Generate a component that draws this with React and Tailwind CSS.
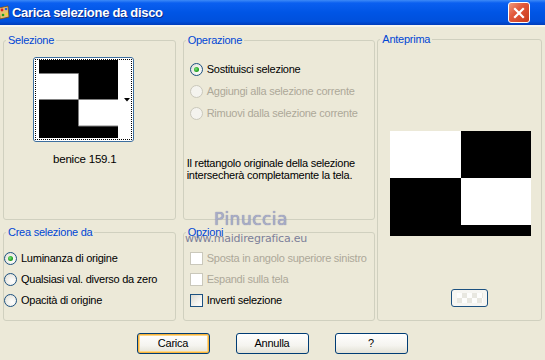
import React from "react";

const FONT = { fontFamily: '"Liberation Sans", Arial, sans-serif' };

function Radio({ checked, disabled, label }) {
  return (
    <div className="flex items-center h-[13px]">
      <span
        className={
          "relative w-[13px] h-[13px] rounded-full border flex-none " +
          (disabled
            ? "border-[#cac8bb] bg-[#f4f3ee]"
            : "border-[#1c5180] bg-[radial-gradient(circle_at_65%_65%,#ffffff_0%,#e8e7e0_70%,#d4d2c6_100%)]")
        }
      >
        {checked && (
          <span className="absolute left-[3px] top-[3px] w-[5px] h-[5px] rounded-full bg-[radial-gradient(circle_at_40%_40%,#7be37b_0%,#21a121_60%,#1a7e1a_100%)]" />
        )}
      </span>
      <span className={"ml-[4px] whitespace-nowrap " + (disabled ? "text-[#aca899]" : "text-black")}>{label}</span>
    </div>
  );
}

function Check({ disabled, label }) {
  return (
    <div className="flex items-center h-[13px]">
      <span
        className={
          "w-[13px] h-[13px] border flex-none " +
          (disabled
            ? "border-[#cac8bb] bg-white"
            : "border-[#1c5180] bg-[linear-gradient(135deg,#dcdad0_0%,#f4f3ee_60%,#ffffff_100%)]")
        }
      />
      <span className={"ml-[4px] whitespace-nowrap " + (disabled ? "text-[#aca899]" : "text-black")}>{label}</span>
    </div>
  );
}

function Group({ label, className, children }) {
  return (
    <div className={"relative border border-[#d0d0bf] rounded-[3px] " + className}>
      <span className="absolute -top-[8px] left-[2px] px-[2px] bg-[#ece9d8] text-[#0046d5] leading-[14px]">{label}</span>
      {children}
    </div>
  );
}

function Btn({ children, def }) {
  return (
    <div
      className={
        "w-[73px] h-[21px] rounded-[3px] border border-[#003c74] flex items-center justify-center text-black bg-[linear-gradient(180deg,#ffffff_0%,#f5f4ef_60%,#e3e1d6_100%)] " +
        (def ? "shadow-[inset_0_0_0_1px_#f8b33c,inset_0_0_0_2px_#fdd889]" : "")
      }
    >
      {children}
    </div>
  );
}

export default function App() {
  return (
    <div className="w-[545px] h-[360px] bg-[#ece9d8] overflow-hidden relative text-[11px] tracking-[-0.25px]" style={FONT}>
      {/* title bar */}
      <div className="h-[25px] flex items-center bg-[linear-gradient(180deg,#3d8af7_0%,#0a5ff0_12%,#0055e5_50%,#0050dc_85%,#003dbb_100%)]">
        <svg width="11" height="16" viewBox="0 0 11 16" className="flex-none -ml-[1px]">
          <path d="M0 3 L9 1 L10 12 L1 14 Z" fill="#e8c070" stroke="#7a4a10" strokeWidth="0.8" />
          <circle cx="3" cy="5" r="1.4" fill="#e02020" />
          <circle cx="7" cy="4" r="1.3" fill="#2060e0" />
          <circle cx="4" cy="10" r="1.3" fill="#20a020" />
          <circle cx="7.5" cy="9" r="1.2" fill="#f0e020" />
        </svg>
        <span className="ml-[2px] text-white font-bold text-[13px] tracking-[-0.3px] [text-shadow:1px_1px_0_#0a2a8a]">Carica selezione da disco</span>
        <div className="ml-auto mr-[15px] w-[22px] h-[21px] rounded-[3px] border border-white bg-[linear-gradient(135deg,#f09a7e_0%,#e2593c_40%,#c8391a_100%)] flex items-center justify-center">
          <svg width="12" height="12" viewBox="0 0 12 12">
            <path d="M2 2 L10 10 M10 2 L2 10" stroke="white" strokeWidth="2.2" strokeLinecap="square" />
          </svg>
        </div>
      </div>
      <div className="h-[2px] bg-[#f6f5ef]" />

      {/* body */}
      <div className="flex pt-[13px] pl-[3px] pr-[3px]">
        {/* column 1 */}
        <div className="w-[173px] flex flex-col">
          <Group label="Selezione" className="h-[180px]">
            <div className="mt-[16px] ml-[29px] w-[101px] h-[85px] rounded-[3px] border border-[#3c6e9e] bg-white p-[1px]">
              <div className="relative w-full h-full border border-dotted border-black">
                <svg width="79" height="78" viewBox="0 0 79 78" className="absolute left-[3px] top-0">
                  <rect x="0" y="0" width="79" height="78" fill="black" />
                  <rect x="0" y="13" width="39" height="26" fill="white" />
                  <rect x="39" y="39" width="40" height="27" fill="white" />
                  <path d="M0 13.5 H39.5 V66 H79 M39.5 39.5 H79 M0 39.5 H39" stroke="#808080" strokeWidth="1" fill="none" />
                </svg>
                <svg width="6" height="4" viewBox="0 0 6 4" className="absolute right-[1px] top-[38px]">
                  <path d="M0 0 H6 L3 3.5 Z" fill="black" />
                </svg>
              </div>
            </div>
            <div className="mt-[9px] ml-[49px] text-[11.5px] tracking-[-0.2px] text-black">benice 159.1</div>
          </Group>
          <Group label="Crea selezione da" className="mt-[12px] h-[89px]">
            <div className="pt-[19px] pl-[0px] flex flex-col gap-[8px]">
              <Radio checked label="Luminanza di origine" />
              <Radio label="Qualsiasi val. diverso da zero" />
              <Radio label="Opacità di origine" />
            </div>
          </Group>
        </div>

        {/* column 2 */}
        <div className="ml-[7px] w-[193px] flex flex-col">
          <Group label="Operazione" className="h-[180px]">
            <div className="pt-[22px] pl-[6px] flex flex-col gap-[9px]">
              <Radio checked label="Sostituisci selezione" />
              <Radio disabled label="Aggiungi alla selezione corrente" />
              <Radio disabled label="Rimuovi dalla selezione corrente" />
            </div>
            <div className="mt-[37px] ml-[3px] leading-[12px] text-black">
              Il rettangolo originale della selezione
              <br />
              intersecherà completamente la tela.
            </div>
          </Group>
          <Group label="Opzioni" className="mt-[12px] h-[89px]">
            <div className="pt-[19px] pl-[6px] flex flex-col gap-[8px]">
              <Check disabled label="Sposta in angolo superiore sinistro" />
              <Check disabled label="Espandi sulla tela" />
              <Check label="Inverti selezione" />
            </div>
          </Group>
        </div>

        {/* column 3 */}
        <div className="ml-[2px] w-[165px] -mt-[1px]">
          <Group label="Anteprima" className="h-[282px] flex flex-col items-center">
            <svg width="141" height="105" viewBox="0 0 141 105" className="mt-[91px] ml-[2px]">
              <rect x="0" y="0" width="141" height="105" fill="black" />
              <rect x="0" y="0" width="71" height="47" fill="white" />
              <rect x="71" y="47" width="70" height="47" fill="white" />
            </svg>
            <div className="mt-[53px] ml-[20px] w-[37px] h-[18px] rounded-[3px] border border-[#1c5180] bg-[#f7f6f2] flex items-center justify-center">
              <div className="w-[26px] h-[10px] bg-[repeating-conic-gradient(#e4e3dc_0%_25%,#ffffff_0%_50%)] bg-[length:10px_10px] opacity-80" />
            </div>
          </Group>
        </div>
      </div>

      {/* buttons */}
      <div className="mt-[12px] flex justify-center gap-[26px] pr-[1px]">
        <Btn def>Carica</Btn>
        <Btn>Annulla</Btn>
        <Btn>?</Btn>
      </div>

      {/* watermark */}
      <div className="absolute left-[214px] top-[209px] text-[17px] leading-[20px] tracking-[0.5px] text-[#a9adc8] [text-shadow:0_0_1px_#6f7399]" style={{ fontFamily: '"DejaVu Sans", sans-serif' }}>
        Pinuccia
      </div>
      <div className="absolute left-[185px] top-[233px] text-[11px] leading-[11px] tracking-[-0.2px] text-[#7c7f99]" style={{ fontFamily: '"DejaVu Sans", sans-serif' }}>
        www.maidiregrafica.eu
      </div>
    </div>
  );
}
